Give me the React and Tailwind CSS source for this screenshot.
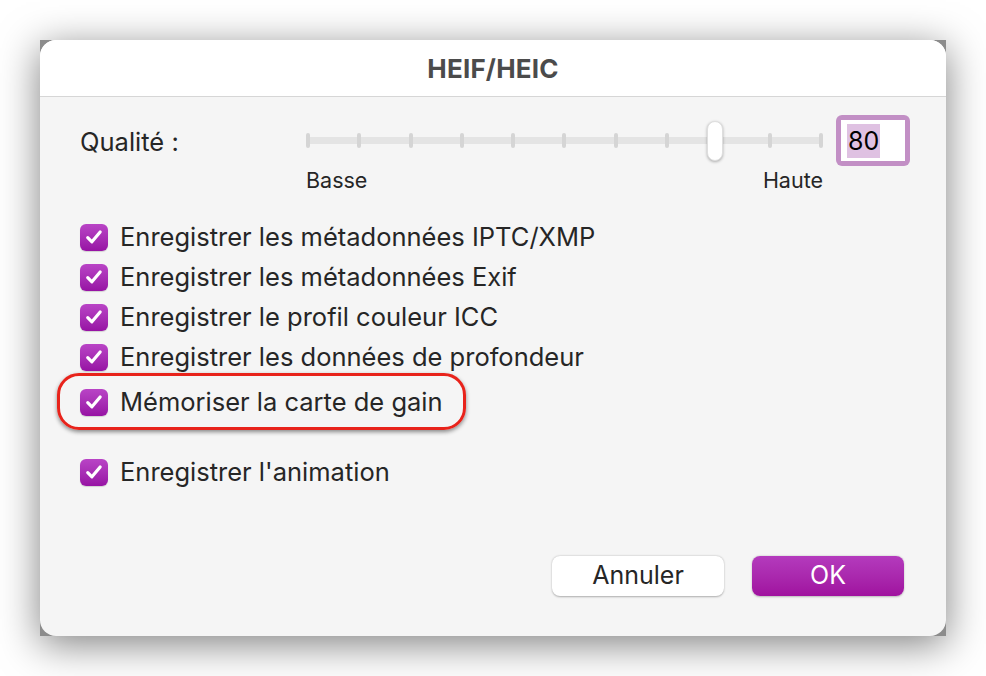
import React from "react";

function Check() {
  return (
    <div className="w-[28px] h-[27px] rounded-[6px] bg-gradient-to-b from-[#b944c6] to-[#9712a4] flex items-center justify-center shrink-0 shadow-[0_1px_1px_rgba(0,0,0,0.15)]">
      <svg width="22" height="22" viewBox="0 0 20 20" fill="none">
        <path d="M4.3 10.6 L8.1 14.4 L15.6 5.4" stroke="white" strokeWidth="2.9" strokeLinecap="round" strokeLinejoin="round" />
      </svg>
    </div>
  );
}

function Row({ label, className = "" }) {
  return (
    <div className={"flex items-center h-[40px] gap-[12px] " + className}>
      <Check />
      <span className="text-[25.5px] text-[#262626]">{label}</span>
    </div>
  );
}

export default function App() {
  const ticks = Array.from({ length: 11 });
  return (
    <div
      className="relative w-[986px] h-[676px] bg-white flex pt-[40px] pl-[40px]"
      style={{ fontFamily: "Inter, 'Liberation Sans', sans-serif" }}
    >
      <div className="w-[906px] h-[596px] bg-[#8c8c8c] shadow-[0_8px_38px_rgba(0,0,0,0.5)]">
        <div className="w-full h-full rounded-[16px] overflow-hidden bg-[#f5f5f5] flex flex-col">
          <div className="h-[57px] bg-white border-b border-[#d6d6d6] flex items-center justify-center">
            <span className="text-[26px] font-bold text-[#4b4b4b] tracking-[0.2px]">HEIF/HEIC</span>
          </div>
          <div className="flex-1 flex flex-col pl-[40px] pr-[36px] pb-[40px]">
            <div className="flex items-start mt-[18px]">
              <div className="w-[220px] shrink-0 h-[50px] flex items-center pt-[4px] text-[25.5px] text-[#262626]">Qualité :</div>
              <div className="w-[528px] shrink-0 flex flex-col">
                <div className="relative h-[50px] flex items-center">
                  <div className="relative w-full h-[15px] flex items-center justify-between pl-[6px] pr-[5px]">
                    <div className="absolute left-[6px] right-[6px] top-[4px] h-[7px] bg-[#e4e4e4] rounded-[2px]" />
                    {ticks.map((_, i) => (
                      <div key={i} className="relative w-[4px] h-[15px] rounded-[2px] bg-[#d5d5d5]" />
                    ))}
                  </div>
                  <div className="absolute left-[407px] top-[6px] w-[16px] h-[40px] rounded-full bg-white shadow-[0_1px_3px_rgba(0,0,0,0.3)] border border-[#dedede]" />
                </div>
                <div className="flex justify-between pl-[6px] pr-[5px] mt-[2px] text-[21.5px] text-[#262626] leading-[26px]">
                  <span>Basse</span>
                  <span>Haute</span>
                </div>
              </div>
              <div className="ml-[8px] shrink-0 w-[74px] h-[51px] rounded-[6px] bg-[#c28fc5] p-[5px]">
                <div className="w-full h-full bg-white flex items-center pl-[6px]">
                  <span className="bg-[#dfc1e2] text-[25px] text-black leading-[34px] px-[1px]">80</span>
                </div>
              </div>
            </div>
            <div className="flex flex-col mt-[24px]">
              <Row label="Enregistrer les métadonnées IPTC/XMP" />
              <Row label="Enregistrer les métadonnées Exif" />
              <Row label="Enregistrer le profil couleur ICC" />
              <Row label="Enregistrer les données de profondeur" />
              <Row label="Mémoriser la carte de gain" className="mt-[5px]" />
              <Row label="Enregistrer l'animation" className="mt-[30px]" />
            </div>
            <div className="mt-auto mr-[6px] flex justify-end gap-[28px]">
              <button className="w-[172px] h-[40px] rounded-[8px] bg-white text-[25px] text-[#262626] shadow-[0_0.5px_2px_rgba(0,0,0,0.3)]">
                Annuler
              </button>
              <button className="w-[152px] h-[40px] rounded-[8px] bg-gradient-to-b from-[#b43abd] to-[#a0119f] text-[25px] text-white shadow-[0_0.5px_2px_rgba(0,0,0,0.25)]">
                OK
              </button>
            </div>
          </div>
        </div>
      </div>
      <div className="absolute left-[57px] top-[373px] w-[409px] h-[57px] rounded-[22px] border-[3px] border-[#e8231b] shadow-[0_2px_4px_rgba(0,0,0,0.45)]" />
    </div>
  );
}
